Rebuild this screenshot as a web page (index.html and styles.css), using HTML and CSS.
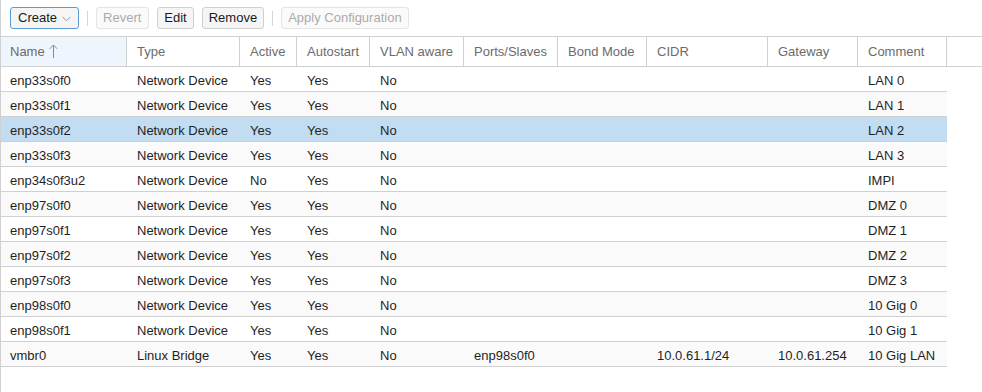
FILE: index.html
```html
<!DOCTYPE html>
<html>
<head>
<meta charset="utf-8">
<link rel="stylesheet" href="styles.css">
</head>
<body>
<div class="panel">
  <div class="toolbar">
    <button class="btn btn-focus">Create <svg class="chev" width="9" height="6" viewBox="0 0 9 6"><path d="M0.5 0.8 L4.5 4.8 L8.5 0.8" fill="none" stroke="#9a9a9a" stroke-width="1"/></svg></button>
    <span class="sep"></span>
    <button class="btn btn-disabled btn-revert">Revert</button>
    <button class="btn">Edit</button>
    <button class="btn">Remove</button>
    <span class="sep"></span>
    <button class="btn btn-disabled">Apply Configuration</button>
  </div>
  <div class="grid-head">
    <div class="hc c-name sorted">Name <svg class="sort" width="9" height="14" viewBox="0 0 9 14"><path d="M4.5 1 V14 M0.8 4.8 L4.5 1 L8.2 4.8" fill="none" stroke="#8a8a8a" stroke-width="1"/></svg></div>
    <div class="hc c-type">Type</div>
    <div class="hc c-active">Active</div>
    <div class="hc c-auto">Autostart</div>
    <div class="hc c-vlan">VLAN aware</div>
    <div class="hc c-ports">Ports/Slaves</div>
    <div class="hc c-bond">Bond Mode</div>
    <div class="hc c-cidr">CIDR</div>
    <div class="hc c-gw">Gateway</div>
    <div class="hc c-comment">Comment</div>
    <div class="hc-fill"></div>
  </div>
  <div class="grid-body">
    <div class="row"><div class="c c-name">enp33s0f0</div><div class="c c-type">Network Device</div><div class="c c-active">Yes</div><div class="c c-auto">Yes</div><div class="c c-vlan">No</div><div class="c c-ports"></div><div class="c c-bond"></div><div class="c c-cidr"></div><div class="c c-gw"></div><div class="c c-comment">LAN 0</div></div>
    <div class="row alt"><div class="c c-name">enp33s0f1</div><div class="c c-type">Network Device</div><div class="c c-active">Yes</div><div class="c c-auto">Yes</div><div class="c c-vlan">No</div><div class="c c-ports"></div><div class="c c-bond"></div><div class="c c-cidr"></div><div class="c c-gw"></div><div class="c c-comment">LAN 1</div></div>
    <div class="row selected"><div class="c c-name">enp33s0f2</div><div class="c c-type">Network Device</div><div class="c c-active">Yes</div><div class="c c-auto">Yes</div><div class="c c-vlan">No</div><div class="c c-ports"></div><div class="c c-bond"></div><div class="c c-cidr"></div><div class="c c-gw"></div><div class="c c-comment">LAN 2</div></div>
    <div class="row alt"><div class="c c-name">enp33s0f3</div><div class="c c-type">Network Device</div><div class="c c-active">Yes</div><div class="c c-auto">Yes</div><div class="c c-vlan">No</div><div class="c c-ports"></div><div class="c c-bond"></div><div class="c c-cidr"></div><div class="c c-gw"></div><div class="c c-comment">LAN 3</div></div>
    <div class="row"><div class="c c-name">enp34s0f3u2</div><div class="c c-type">Network Device</div><div class="c c-active">No</div><div class="c c-auto">Yes</div><div class="c c-vlan">No</div><div class="c c-ports"></div><div class="c c-bond"></div><div class="c c-cidr"></div><div class="c c-gw"></div><div class="c c-comment">IMPI</div></div>
    <div class="row alt"><div class="c c-name">enp97s0f0</div><div class="c c-type">Network Device</div><div class="c c-active">Yes</div><div class="c c-auto">Yes</div><div class="c c-vlan">No</div><div class="c c-ports"></div><div class="c c-bond"></div><div class="c c-cidr"></div><div class="c c-gw"></div><div class="c c-comment">DMZ 0</div></div>
    <div class="row"><div class="c c-name">enp97s0f1</div><div class="c c-type">Network Device</div><div class="c c-active">Yes</div><div class="c c-auto">Yes</div><div class="c c-vlan">No</div><div class="c c-ports"></div><div class="c c-bond"></div><div class="c c-cidr"></div><div class="c c-gw"></div><div class="c c-comment">DMZ 1</div></div>
    <div class="row alt"><div class="c c-name">enp97s0f2</div><div class="c c-type">Network Device</div><div class="c c-active">Yes</div><div class="c c-auto">Yes</div><div class="c c-vlan">No</div><div class="c c-ports"></div><div class="c c-bond"></div><div class="c c-cidr"></div><div class="c c-gw"></div><div class="c c-comment">DMZ 2</div></div>
    <div class="row"><div class="c c-name">enp97s0f3</div><div class="c c-type">Network Device</div><div class="c c-active">Yes</div><div class="c c-auto">Yes</div><div class="c c-vlan">No</div><div class="c c-ports"></div><div class="c c-bond"></div><div class="c c-cidr"></div><div class="c c-gw"></div><div class="c c-comment">DMZ 3</div></div>
    <div class="row alt"><div class="c c-name">enp98s0f0</div><div class="c c-type">Network Device</div><div class="c c-active">Yes</div><div class="c c-auto">Yes</div><div class="c c-vlan">No</div><div class="c c-ports"></div><div class="c c-bond"></div><div class="c c-cidr"></div><div class="c c-gw"></div><div class="c c-comment">10 Gig 0</div></div>
    <div class="row"><div class="c c-name">enp98s0f1</div><div class="c c-type">Network Device</div><div class="c c-active">Yes</div><div class="c c-auto">Yes</div><div class="c c-vlan">No</div><div class="c c-ports"></div><div class="c c-bond"></div><div class="c c-cidr"></div><div class="c c-gw"></div><div class="c c-comment">10 Gig 1</div></div>
    <div class="row alt"><div class="c c-name">vmbr0</div><div class="c c-type">Linux Bridge</div><div class="c c-active">Yes</div><div class="c c-auto">Yes</div><div class="c c-vlan">No</div><div class="c c-ports">enp98s0f0</div><div class="c c-bond"></div><div class="c c-cidr">10.0.61.1/24</div><div class="c c-gw">10.0.61.254</div><div class="c c-comment">10 Gig LAN</div></div>
  </div>
</div>
</body>
</html>
```

FILE: styles.css
```css
html, body {
  margin: 0;
  padding: 0;
  background: #fff;
}
body {
  font-family: "Liberation Sans", Arial, sans-serif;
  font-size: 13px;
  color: #1f1f1f;
}
.panel {
  border-left: 1px solid #d0d0d0;
  min-height: 392px;
  box-sizing: border-box;
}
.toolbar {
  height: 36px;
  display: flex;
  align-items: center;
  gap: 8px;
  padding-left: 9px;
  box-sizing: border-box;
}
.btn {
  font-family: inherit;
  font-size: 13px;
  height: 22px;
  padding: 0 6px;
  border: 1px solid #cfcfcf;
  border-radius: 3px;
  background: #f5f5f5;
  color: #1a1a1a;
  display: inline-flex;
  align-items: center;
  line-height: 20px;
  box-sizing: border-box;
}
.btn-focus {
  border-color: #5b9bd3;
  padding: 0 7px 0 7px;
}
.btn-revert {
  padding: 0 7px 0 6px;
}
.chev {
  margin-left: 5px;
  margin-top: 1px;
}
.btn-disabled {
  color: #ababab;
  border-color: #e4e4e4;
  background: #fafafa;
}
.sep {
  width: 1px;
  height: 15px;
  background: #d6d6d6;
}
.grid-head {
  display: flex;
  border-top: 1px solid #d0d0d0;
  border-bottom: 1px solid #d0d0d0;
  height: 31px;
  box-sizing: border-box;
}
.hc {
  color: #6b6b6b;
  line-height: 29px;
  padding: 0 10px;
  border-right: 1px solid #d0d0d0;
  box-sizing: border-box;
  white-space: nowrap;
  overflow: hidden;
  display: flex;
  align-items: center;
}
.hc.sorted {
  background: #eef5fc;
  padding-left: 9px;
}
.sort {
  margin-left: 4px;
  margin-top: -1px;
}
.hc-fill {
  flex: 1;
}
.grid-body {
  width: 946px;
}
.row {
  display: flex;
  height: 25px;
  border-bottom: 1px solid #d0d0d0;
  box-sizing: border-box;
  background: #fff;
}
.row.alt {
  background: #fafafa;
}
.row.selected {
  background: #c2dcf1;
}
.c {
  padding: 3px 10px 0 10px;
  line-height: 21px;
  box-sizing: border-box;
  white-space: nowrap;
  overflow: hidden;
  text-overflow: ellipsis;
}
.c.c-name {
  padding-left: 9px;
}
.c-name { width: 126px; flex: none; }
.c-type { width: 113px; flex: none; }
.c-active { width: 57px; flex: none; }
.c-auto { width: 73px; flex: none; }
.c-vlan { width: 94px; flex: none; }
.c-ports { width: 94px; flex: none; }
.c-bond { width: 89px; flex: none; }
.c-cidr { width: 121px; flex: none; }
.c-gw { width: 90px; flex: none; }
.c-comment { width: 89px; flex: none; }
```
